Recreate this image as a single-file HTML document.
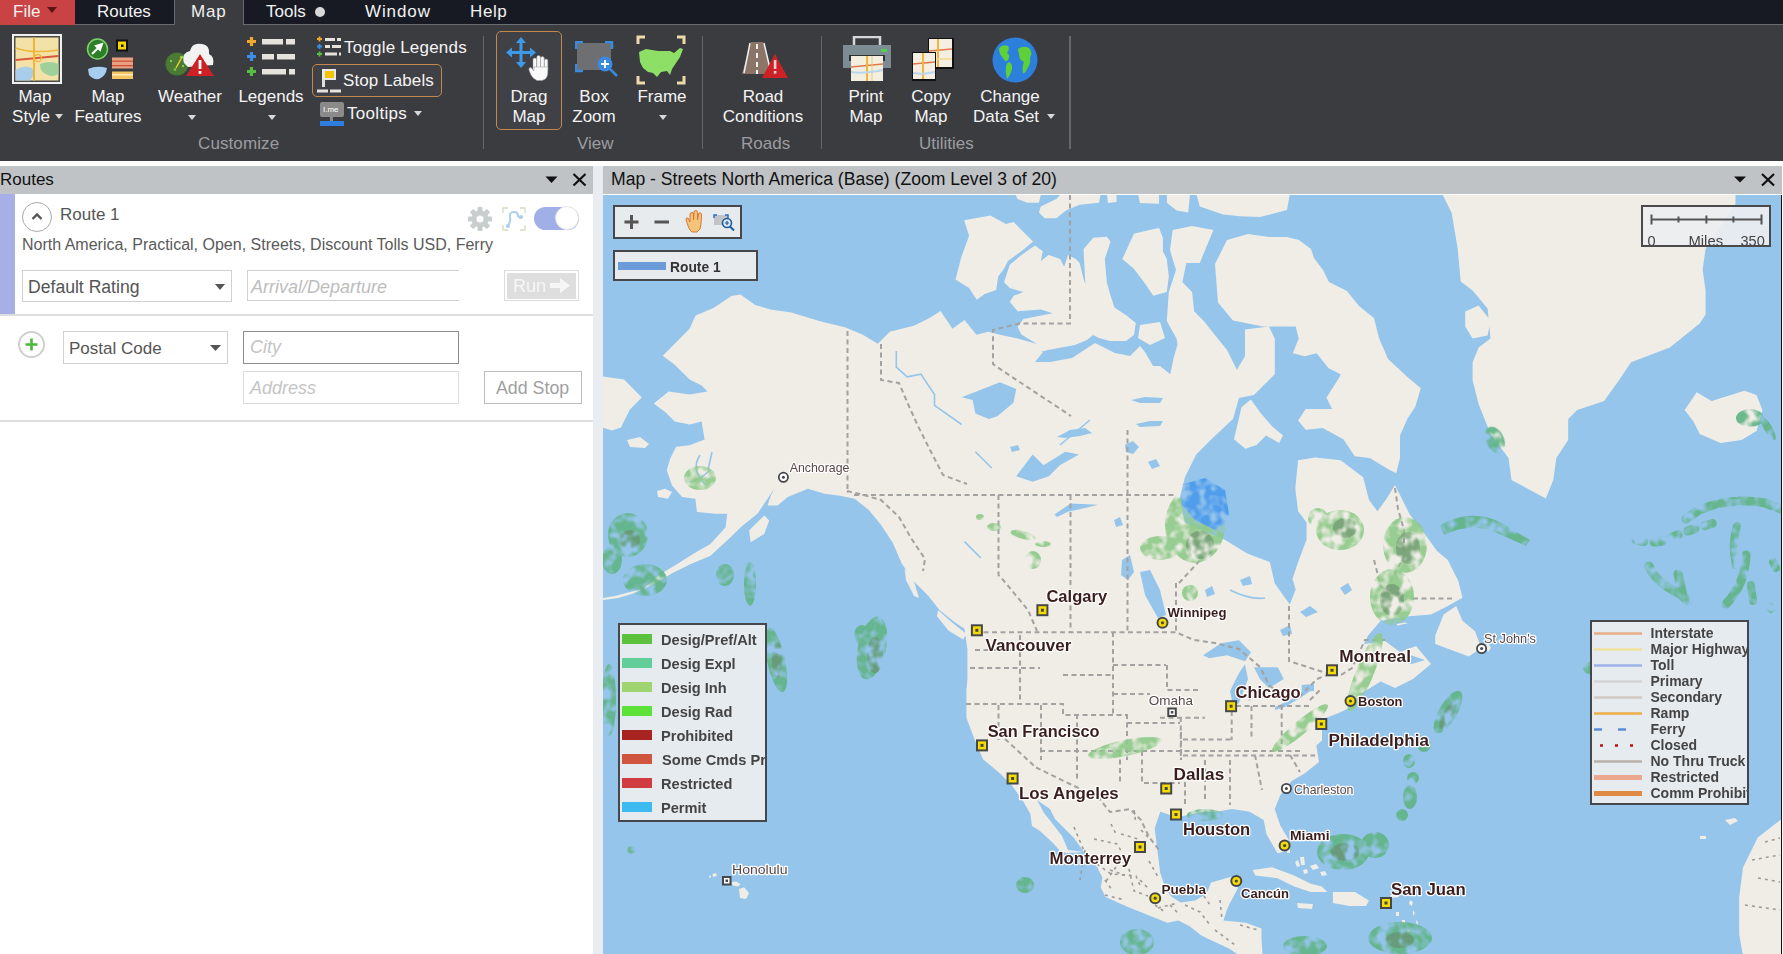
<!DOCTYPE html>
<html><head><meta charset="utf-8">
<style>
*{box-sizing:border-box;margin:0;padding:0}
html,body{width:1783px;height:954px;overflow:hidden;background:#fff;font-family:"Liberation Sans",sans-serif}
.abs{position:absolute}
#menubar{position:absolute;left:0;top:0;width:1783px;height:25px;background:#171a22;border-bottom:1px solid #6a6b70}
.mi{position:absolute;top:0;height:25px;color:#f2f2f2;font-size:17px;line-height:23px;white-space:nowrap}
#ribbon{position:absolute;left:0;top:25px;width:1783px;height:136px;background:#3b3c40}
.rt{position:absolute;color:#f4f4f4;font-size:17px;line-height:20px;text-align:center;white-space:nowrap}
.gl{position:absolute;color:#9b9ca1;font-size:17px;line-height:20px;white-space:nowrap}
.sep{position:absolute;top:36px;width:1px;height:113px;background:#66676b}
.arr{position:absolute;width:0;height:0;border-left:4px solid transparent;border-right:4px solid transparent;border-top:5px solid #d8d8d8}
#strip{position:absolute;left:0;top:161px;width:1783px;height:5px;background:#fff}
.hdr{position:absolute;top:166px;height:28px;background:#bfc3c6;color:#111;font-size:17px;line-height:27px;white-space:nowrap}
#left{position:absolute;left:0;top:194px;width:593px;height:760px;background:#fff}
#divider{position:absolute;left:593px;top:166px;width:10px;height:788px;background:#e9ecf0}
#map{position:absolute;left:603px;top:195px;width:1178px;height:759px;background:#95c5eb;overflow:hidden}
#rborder{position:absolute;left:1781px;top:195px;width:1px;height:759px;background:#111}
</style></head><body>
<div id="menubar">
  <div class="mi" style="left:0;width:75px;background:#c94244"><span style="position:absolute;left:13px">File</span></div>
  <div class="mi" style="left:97px">Routes</div>
  <div class="mi" style="left:174px;width:70px;height:26px;background:#3b3c40;border-left:1px solid #6a6b70;border-right:1px solid #6a6b70"><span style="position:absolute;left:16px;letter-spacing:0.8px">Map</span></div>
  <div class="mi" style="left:266px">Tools</div>
  <div class="mi" style="left:365px;letter-spacing:0.9px">Window</div>
  <div class="mi" style="left:470px;letter-spacing:0.6px">Help</div>
</div>
<div id="ribbon"><div style="position:absolute;left:0;top:-25px;width:1783px;height:161px">
<!-- Map Style -->
<svg class="abs" style="left:12px;top:34px" width="50" height="50" viewBox="0 0 50 50">
 <rect x="1" y="1" width="48" height="48" fill="#4a4a4a" stroke="#f0f0f0" stroke-width="2"/>
 <rect x="3.5" y="3.5" width="43" height="43" fill="#f3e2a8"/>
 <path d="M3.5 36 Q12 30 20 34 Q24 40 18 46.5 L3.5 46.5 Z" fill="#a9cdea"/>
 <path d="M28 30 Q38 26 46.5 30 L46.5 40 Q40 44 34 40 Q28 38 28 30Z" fill="#9fd09a"/>
 <path d="M3.5 14 Q20 20 46.5 16" stroke="#f0b63a" stroke-width="1.5" fill="none"/>
 <path d="M3.5 26 L46.5 22" stroke="#d9573b" stroke-width="2" fill="none"/>
 <path d="M22 3.5 L22 46.5" stroke="#f0b63a" stroke-width="2" fill="none"/>
 <circle cx="26" cy="24" r="3.5" stroke="#f0b63a" stroke-width="1.3" fill="none"/>
</svg>
<div class="rt" style="left:0;top:87px;width:70px">Map<br><span style="position:relative;left:-4px">Style</span></div>
<div class="arr" style="left:55px;top:114px"></div>
<!-- Map Features -->
<svg class="abs" style="left:86px;top:38px" width="50" height="44" viewBox="0 0 50 44">
 <circle cx="11.5" cy="11" r="10" fill="#2e7d2a" stroke="#7cd36a" stroke-width="1.5"/>
 <path d="M6 16 L12 10 M10 8 L16 6 L14 12 Z" stroke="#fff" stroke-width="2" fill="#fff"/>
 <rect x="30" y="1.5" width="12" height="12" fill="#111"/>
 <rect x="32" y="3.5" width="8" height="8" fill="#f5d800"/>
 <rect x="35" y="6.5" width="2.5" height="2.5" fill="#111"/>
 <rect x="26" y="19.5" width="21" height="11" fill="#e8a080"/>
 <rect x="26" y="22.5" width="21" height="1.3" fill="#d0503a"/><rect x="26" y="27" width="21" height="1.3" fill="#d0503a"/>
 <rect x="26" y="33.5" width="21" height="7.5" fill="#f3c565"/>
 <rect x="26" y="36.2" width="21" height="1.3" fill="#fff2c8"/>
 <path d="M2 31 Q11 27 21 30 Q20 38 13 41 Q7 42 3 37 Z" fill="#a7cdf0"/>
</svg>
<div class="rt" style="left:72px;top:87px;width:72px">Map<br>Features</div>
<!-- Weather -->
<svg class="abs" style="left:164px;top:41px" width="52" height="37" viewBox="0 0 52 37">
 <circle cx="13" cy="23" r="11.5" fill="#4c7a34"/>
 <circle cx="13" cy="23" r="11.5" fill="none" stroke="#2f5a20" stroke-width="1" stroke-dasharray="2 2"/>
 <path d="M6 20 l2 0 M16 16 l3 0 M10 28 l2 1 M18 25 l2 0" stroke="#7bd04d" stroke-width="2"/>
 <path d="M12 27 L18 16" stroke="#e8d030" stroke-width="1.5"/>
 <path d="M20 22 Q17 12 26 10 Q28 1 38 3 Q46 4 45 13 Q51 16 49 24 L24 26 Z" fill="#f2f2f2"/>
 <path d="M36 13 L50 35 L22 35 Z" fill="#cc2226"/>
 <rect x="34.6" y="19" width="2.8" height="9" fill="#fff"/><rect x="34.6" y="30" width="2.8" height="2.8" fill="#fff"/>
</svg>
<div class="rt" style="left:150px;top:87px;width:80px">Weather</div>
<div class="arr" style="left:188px;top:115px"></div>
<!-- Legends -->
<svg class="abs" style="left:246px;top:36px" width="52" height="44" viewBox="0 0 52 44">
 <path d="M1 5.5 h9 M5.5 1 v9" stroke="#f0a830" stroke-width="3.2"/>
 <path d="M1 20.5 h9 M5.5 16 v9" stroke="#3a8ee8" stroke-width="3.2"/>
 <path d="M1 35.5 h9 M5.5 31 v9" stroke="#58c040" stroke-width="3.2"/>
 <rect x="16" y="3" width="21" height="5.5" fill="#e6e2dc"/><rect x="40" y="3" width="9" height="5.5" fill="#e6e2dc"/>
 <rect x="16" y="18" width="12" height="5.5" fill="#e6e2dc"/><rect x="31" y="18" width="18" height="5.5" fill="#e6e2dc"/>
 <rect x="16" y="33" width="24" height="5.5" fill="#e6e2dc"/><rect x="43" y="33" width="6" height="5.5" fill="#e6e2dc"/>
</svg>
<div class="rt" style="left:231px;top:87px;width:80px">Legends</div>
<div class="arr" style="left:268px;top:115px"></div>
<!-- Toggle legends small -->
<svg class="abs" style="left:316px;top:36px" width="26" height="22" viewBox="0 0 26 22">
 <path d="M1 3 h5 M3.5 0.5 v5" stroke="#f0a830" stroke-width="1.8"/>
 <path d="M1 10.5 h5 M3.5 8 v5" stroke="#3a8ee8" stroke-width="1.8"/>
 <path d="M1 18 h5 M3.5 15.5 v5" stroke="#58c040" stroke-width="1.8"/>
 <rect x="9" y="2" width="10" height="3" fill="#e6e2dc"/><rect x="21" y="2" width="4" height="3" fill="#e6e2dc"/>
 <rect x="9" y="9" width="5" height="3" fill="#e6e2dc"/><rect x="16" y="9" width="9" height="3" fill="#e6e2dc"/>
 <rect x="9" y="16.5" width="12" height="3" fill="#e6e2dc"/><rect x="23" y="16.5" width="2" height="3" fill="#e6e2dc"/>
</svg>
<div class="rt" style="left:344px;top:38px;text-align:left;letter-spacing:0.2px">Toggle Legends</div>
<!-- Stop labels -->
<div class="abs" style="left:312px;top:64px;width:130px;height:33px;border:1.5px solid #c4884c;border-radius:5px;background:#404146"></div>
<svg class="abs" style="left:316px;top:68px" width="26" height="27" viewBox="0 0 26 27">
 <rect x="6" y="1" width="3" height="18" fill="#e0e0e0"/>
 <rect x="6" y="1" width="14" height="11" fill="#e8e8e8"/>
 <rect x="9" y="3" width="9" height="7" fill="#f5c400"/>
 <rect x="1" y="21.5" width="11" height="3" fill="#e6e2dc"/><rect x="14" y="21.5" width="11" height="3" fill="#e6e2dc"/>
</svg>
<div class="rt" style="left:343px;top:71px;text-align:left;letter-spacing:0.1px">Stop Labels</div>
<!-- Tooltips -->
<svg class="abs" style="left:319px;top:101px" width="26" height="26" viewBox="0 0 26 26">
 <rect x="1" y="1" width="24" height="15" rx="2" fill="#8a8a8a"/>
 <text x="4" y="10.5" font-size="8" fill="#fff" font-family="Liberation Sans">I.me</text>
 <rect x="11" y="16" width="3" height="5" fill="#8a8a8a"/>
 <rect x="1" y="20" width="24" height="5" fill="#2f7de0"/>
</svg>
<div class="rt" style="left:347px;top:104px;text-align:left;letter-spacing:0.3px">Tooltips</div>
<div class="arr" style="left:414px;top:111px"></div>
<div class="gl" style="left:198px;top:134px;letter-spacing:0.1px">Customize</div>
<div class="sep" style="left:483px"></div>
<!-- Drag Map -->
<div class="abs" style="left:496px;top:31px;width:66px;height:99px;border:1.5px solid #c4884c;border-radius:5px;background:#404146"></div>
<svg class="abs" style="left:506px;top:37px" width="46" height="45" viewBox="0 0 46 45">
 <g fill="#3d9ae8">
 <rect x="13.5" y="5" width="3" height="21"/><rect x="4" y="14" width="22" height="3"/>
 <path d="M15 0 L20 6 L10 6Z M15 31 L20 25 L10 25Z M0 15.5 L6 10.5 L6 20.5Z M30 15.5 L24 10.5 L24 20.5Z"/>
 </g>
 <g fill="#fafafa" stroke="#9a9a9a" stroke-width="0.5">
 <rect x="27" y="21" width="3.6" height="13" rx="1.8"/><rect x="30.8" y="18.5" width="3.6" height="15" rx="1.8"/><rect x="34.6" y="19.5" width="3.6" height="14" rx="1.8"/><rect x="38.4" y="22" width="3.4" height="12" rx="1.7"/>
 <path d="M23 33 Q22.5 30 25 30.5 L28 34 L28 30 L41.8 30 L41.8 35 Q42 42 36 43.5 L31 43.5 Q27 42 25 38 Z"/>
 </g>
</svg>
<div class="rt" style="left:496px;top:87px;width:66px">Drag<br>Map</div>
<!-- Box Zoom -->
<svg class="abs" style="left:575px;top:41px" width="44" height="37" viewBox="0 0 44 37">
 <rect x="2" y="2" width="34" height="27" fill="#6e6f73"/>
 <path d="M1 8 V1 H8 M30 1 H37 V8 M1 23 V30 H8" stroke="#3a8ae0" stroke-width="2.5" fill="none"/>
 <circle cx="30" cy="23" r="7.5" fill="#3a8ae0"/>
 <path d="M26 23 h8 M30 19 v8" stroke="#fff" stroke-width="2"/>
 <path d="M35 28 L42 35" stroke="#3a8ae0" stroke-width="2.5"/>
</svg>
<div class="rt" style="left:562px;top:87px;width:64px">Box<br>Zoom</div>
<!-- Frame -->
<svg class="abs" style="left:636px;top:35px" width="50" height="50" viewBox="0 0 50 50">
 <path d="M2 9 V2 H9 M41 2 H48 V9 M2 41 V48 H9 M41 48 H48 V41" stroke="#eed9a8" stroke-width="3" fill="none"/>
 <path d="M3 17 L10 14 L22 16 L34 16 L38 18 L44 13 L47 14 L44 22 L40 28 L36 34 L34 40 L31 36 L25 37 L21 42 L17 38 L12 37 L7 33 L4 27 Z" fill="#8de065"/>
</svg>
<div class="rt" style="left:626px;top:87px;width:72px">Frame</div>
<div class="arr" style="left:659px;top:115px"></div>
<div class="gl" style="left:577px;top:134px">View</div>
<div class="sep" style="left:702px"></div>
<!-- Road Conditions -->
<svg class="abs" style="left:741px;top:41px" width="48" height="38" viewBox="0 0 48 38">
 <path d="M10 1 L22 1 L32 33 L1 33 Z" fill="#8a7568"/>
 <path d="M9 2 L3 32 M23 2 L30 32" stroke="#f0f0f0" stroke-width="1.5"/>
 <path d="M16 3 V8 M16 12 V17 M16 21 V26 M16 29 V33" stroke="#f0f0f0" stroke-width="2"/>
 <path d="M34 13 L47 37 L21 37 Z" fill="#cc2226"/>
 <rect x="32.8" y="19" width="2.6" height="9" fill="#f4d0d0"/><rect x="32.8" y="30" width="2.6" height="2.6" fill="#f4d0d0"/>
</svg>
<div class="rt" style="left:713px;top:87px;width:100px">Road<br>Conditions</div>
<div class="gl" style="left:741px;top:134px">Roads</div>
<div class="sep" style="left:821px"></div>
<!-- Print Map -->
<svg class="abs" style="left:842px;top:36px" width="50" height="46" viewBox="0 0 50 46">
 <rect x="12" y="1" width="26" height="12" fill="none" stroke="#d8d8d8" stroke-width="2.5"/>
 <rect x="1" y="9" width="48" height="23" fill="#7d8b92"/>
 <rect x="39" y="13" width="6" height="3" fill="#4fd04f"/>
 <rect x="7" y="19" width="36" height="6" fill="#2f3336"/>
 <rect x="9" y="20" width="32" height="25" fill="#f3efe0"/>
 <path d="M9 31 L41 28" stroke="#e0784a" stroke-width="1.5"/>
 <path d="M25 20 L25 45" stroke="#f0b63a" stroke-width="2"/>
 <path d="M30 20 L30 45" stroke="#f3c96a" stroke-width="1"/>
 <path d="M9 36 Q20 38 41 34" stroke="#b9d6ee" stroke-width="2" fill="none"/>
</svg>
<div class="rt" style="left:826px;top:87px;width:80px">Print<br>Map</div>
<!-- Copy Map -->
<svg class="abs" style="left:911px;top:37px" width="44" height="44" viewBox="0 0 44 44">
 <rect x="17" y="1" width="26" height="31" fill="#111"/>
 <rect x="18" y="2" width="23" height="28" fill="#f4efe2"/>
 <path d="M18 14 L41 12" stroke="#e0784a" stroke-width="1.5"/><path d="M27 2 V30" stroke="#f0b63a" stroke-width="2"/>
 <path d="M18 22 L41 22" stroke="#f3d890" stroke-width="1.5"/>
 <rect x="1" y="15" width="24" height="29" fill="#111"/>
 <rect x="2" y="16" width="22" height="26" fill="#f4efe2"/>
 <path d="M2 27 L24 25" stroke="#e0784a" stroke-width="1.5"/><path d="M12 16 V42" stroke="#f0b63a" stroke-width="2"/>
 <path d="M2 36 Q12 38 24 35" stroke="#b9d6ee" stroke-width="2" fill="none"/>
</svg>
<div class="rt" style="left:891px;top:87px;width:80px">Copy<br>Map</div>
<!-- Change Data Set -->
<svg class="abs" style="left:991px;top:36px" width="48" height="48" viewBox="0 0 48 48">
 <circle cx="24" cy="24" r="22.5" fill="#2d7fdc"/>
 <path d="M8 12 Q12 8 17 10 Q19 13 16 17 Q20 19 17 24 Q14 27 12 22 Q8 18 8 12Z" fill="#5ed03a"/>
 <path d="M17 26 Q22 27 21 33 Q19 40 16 43 Q14 36 15 30 Z" fill="#5ed03a"/>
 <path d="M27 13 Q32 9 38 12 Q42 16 39 22 Q40 28 36 33 Q34 38 32 37 Q31 30 33 26 Q28 24 28 19 Z" fill="#5ed03a"/>
</svg>
<div class="rt" style="left:965px;top:87px;width:90px">Change<br><span style="position:relative;left:-4px">Data Set</span></div>
<div class="arr" style="left:1047px;top:114px"></div>
<div class="gl" style="left:919px;top:134px">Utilities</div>
<div class="sep" style="left:1069px;width:2px"></div>
</div>
</div>
<div id="strip"></div>
<div class="hdr" style="left:0;width:593px"><span style="position:absolute;left:0">Routes</span></div>
<div class="hdr" style="left:603px;width:1179px"><span style="position:absolute;left:8px;font-size:17.6px">Map - Streets North America (Base) (Zoom Level 3 of 20)</span></div>
<div id="left"><div style="position:absolute;left:0;top:-194px;width:593px;height:954px;color:#555">
<div class="abs" style="left:0;top:194px;width:15px;height:120px;background:#a7b0e6"></div>
<div class="abs" style="left:0;top:314px;width:593px;height:1.5px;background:#dedede"></div>
<div class="abs" style="left:22px;top:202px;width:30px;height:30px;border:1.5px solid #aaa;border-radius:50%"></div>
<svg class="abs" style="left:30px;top:210px" width="14" height="12" viewBox="0 0 14 12"><path d="M2.5 9 L7 4.5 L11.5 9" stroke="#555" stroke-width="2.4" fill="none"/></svg>
<div class="abs" style="left:60px;top:204px;font-size:17px;line-height:22px;white-space:nowrap">Route 1</div>
<div class="abs" style="left:22px;top:235px;font-size:16px;line-height:20px;white-space:nowrap;color:#5a5a5a">North America, Practical, Open, Streets, Discount Tolls USD, Ferry</div>
<svg class="abs" style="left:467px;top:206px" width="26" height="26" viewBox="0 0 26 26">
 <g fill="#c9cdcd"><circle cx="13" cy="13" r="8.5"/>
 <rect x="10.5" y="1" width="5" height="24" rx="1"/><rect x="1" y="10.5" width="24" height="5" rx="1"/>
 <rect x="10.5" y="1" width="5" height="24" rx="1" transform="rotate(45 13 13)"/><rect x="10.5" y="1" width="5" height="24" rx="1" transform="rotate(-45 13 13)"/></g>
 <circle cx="13" cy="13" r="3.5" fill="#fff"/>
</svg>
<svg class="abs" style="left:502px;top:207px" width="24" height="24" viewBox="0 0 24 24">
 <path d="M1 6 V1 H6 M18 1 H23 V6 M1 18 V23 H6 M18 23 H23 V18" stroke="#d6dcc0" stroke-width="1.3" fill="none"/>
 <path d="M6 19 Q9 14 8 10 Q7 5 12 5 Q16 5 16 9 Q17 11 19 10" stroke="#a8d0ea" stroke-width="2" fill="none"/>
 <circle cx="19" cy="10" r="2" fill="#a8d0ea"/><circle cx="6" cy="19" r="2" fill="#a8d0ea"/>
</svg>
<div class="abs" style="left:534px;top:207px;width:45px;height:23px;border-radius:12px;background:#a0b0e6"></div>
<div class="abs" style="left:555px;top:206px;width:24px;height:24px;border-radius:50%;background:#fff;border:1px solid #e2e2e2"></div>
<div class="abs" style="left:22px;top:270px;width:210px;height:32px;border:1.3px solid #d0d0d0;background:#fff"></div>
<div class="abs" style="left:28px;top:276px;font-size:17.6px;line-height:22px;white-space:nowrap">Default Rating</div>
<svg class="abs" style="left:214px;top:283px" width="12" height="8"><path d="M1 1 L11 1 L6 7Z" fill="#555"/></svg>
<div class="abs" style="left:247px;top:270px;width:212px;height:31px;border-top:1.3px solid #d0d0d0;border-left:1.3px solid #d0d0d0;border-bottom:1.3px solid #d0d0d0"></div>
<div class="abs" style="left:251px;top:276px;font-size:18px;line-height:22px;font-style:italic;color:#bdbdbd;white-space:nowrap">Arrival/Departure</div>
<div class="abs" style="left:504px;top:270px;width:75px;height:31px;border:1.3px solid #dcdcdc;background:#fff"></div>
<div class="abs" style="left:507px;top:273px;width:69px;height:26px;background:#dedede"></div>
<div class="abs" style="left:513px;top:275px;font-size:18px;line-height:22px;color:#f6f6f6;white-space:nowrap">Run</div>
<svg class="abs" style="left:549px;top:277px" width="22" height="17" viewBox="0 0 22 17"><path d="M1 6 H11 V1 L21 8.5 L11 16 V11 H1Z" fill="#f6f6f6"/></svg>
<div class="abs" style="left:18px;top:331px;width:27px;height:27px;border:2.5px solid #cfcfcf;border-radius:50%"></div>
<svg class="abs" style="left:24px;top:337px" width="15" height="15"><path d="M7.5 1.5 V13.5 M1.5 7.5 H13.5" stroke="#4ab83a" stroke-width="2.6"/></svg>
<div class="abs" style="left:63px;top:331px;width:165px;height:33px;border:1.3px solid #d0d0d0;background:#fff"></div>
<div class="abs" style="left:69px;top:338px;font-size:17px;line-height:22px;white-space:nowrap">Postal Code</div>
<svg class="abs" style="left:209px;top:344px" width="13" height="8"><path d="M1 1 L12 1 L6.5 7Z" fill="#555"/></svg>
<div class="abs" style="left:243px;top:331px;width:216px;height:33px;border:1.6px solid #8a8d8d;background:#fff"></div>
<div class="abs" style="left:250px;top:336px;font-size:18px;line-height:22px;font-style:italic;color:#c4c4c4;white-space:nowrap">City</div>
<div class="abs" style="left:243px;top:371px;width:216px;height:33px;border:1.3px solid #dcdcdc;background:#fff"></div>
<div class="abs" style="left:250px;top:377px;font-size:18px;line-height:22px;font-style:italic;color:#c4c4c4;white-space:nowrap">Address</div>
<div class="abs" style="left:484px;top:371px;width:98px;height:33px;border:1.3px solid #bdbdbd;background:#fff"></div>
<div class="abs" style="left:496px;top:377px;font-size:17.8px;line-height:22px;color:#a0a0a0;white-space:nowrap">Add Stop</div>
<div class="abs" style="left:0;top:420px;width:593px;height:1.5px;background:#dedede"></div>
</div>
</div>
<div id="divider"></div>
<div id="map"><svg width="1178" height="759" viewBox="603 195 1178 759" style="position:absolute;left:0;top:0"><path fill="#f0ede6" d="M662.7,355.7 L677.7,340.8 689.6,328.8 695.6,315.4 713.5,307.9 731.4,296.0 740.4,294.5 755.3,305.0 770.3,309.4 791.2,312.4 821.0,321.4 845.0,327.3 862.9,334.8 877.8,343.8 889.8,331.8 913.7,325.8 928.6,318.4 940.6,310.9 952.5,328.8 964.5,319.9 976.4,334.8 988.3,331.8 1000.0,334.8 1017.6,338.5 1037.0,344.0 1043.0,352.0 1035.0,362.0 1050.0,362.0 1072.0,358.0 1095.0,343.0 1101.0,346.0 1115.0,353.0 1130.0,356.0 1140.0,346.0 1145.0,352.0 1153.0,366.0 1160.0,366.0 1170.3,374.2 1173.3,359.3 1179.2,338.4 1191.2,332.4 1209.1,335.4 1221.1,350.3 1236.0,371.3 1245.0,356.3 1245.0,329.4 1268.9,326.4 1274.8,338.4 1274.8,374.2 1253.9,395.1 1239.0,398.1 1233.0,419.0 1213.2,437.6 1196.2,454.5 1184.9,477.2 1179.3,499.8 1184.9,522.5 1201.9,531.0 1224.5,539.5 1247.2,553.6 1269.8,562.1 1274.8,583.5 1289.8,604.4 1295.7,589.5 1292.5,579.1 1298.1,562.1 1306.6,539.5 1306.6,522.5 1298.1,511.2 1295.3,488.5 1298.1,460.2 1315.1,457.4 1340.6,460.2 1363.2,477.2 1368.9,499.8 1377.4,511.2 1385.9,499.8 1395.0,485.0 1409.9,514.8 1421.8,529.7 1436.8,550.7 1447.8,560.0 1458.3,581.0 1462.5,597.8 1447.8,606.1 1431.0,614.5 1405.8,616.6 1380.7,620.8 1368.1,635.5 1363.9,643.9 1385.0,641.0 1400.0,652.0 1413.0,652.0 1392.0,655.0 1416.0,646.0 1431.0,664.0 1413.0,679.0 1395.0,688.0 1380.7,681.6 1359.7,694.2 1355.5,704.7 1338.7,713.1 1322.0,719.4 1322.0,740.4 1316.3,745.4 1319.0,762.0 1305.2,773.0 1291.3,781.3 1280.3,795.2 1274.7,809.0 1280.3,825.6 1288.6,839.5 1288.6,850.6 1277.5,853.3 1266.4,834.0 1263.7,820.1 1249.8,811.8 1232.2,809.0 1216.6,811.8 1204.5,811.8 1176.8,817.3 1160.2,811.8 1154.7,828.4 1157.4,850.6 1160.2,872.7 1165.7,889.3 1171.8,897.0 1180.8,902.6 1195.3,900.4 1206.6,893.7 1211.0,882.4 1223.4,879.0 1231.2,876.8 1238.0,888.0 1229.0,904.9 1226.7,910.5 1223.4,920.6 1245.8,922.8 1261.5,928.4 1261.5,938.5 1262.6,956.0 1240.2,956.0 1229.0,948.6 1212.2,940.8 1201.0,935.2 1189.7,926.2 1178.5,920.6 1167.3,922.8 1150.5,916.0 1128.0,907.0 1105.6,897.0 1100.7,887.5 1102.4,877.4 1097.4,867.4 1084.0,852.0 1066.0,853.0 1060.0,851.0 1053.0,843.0 1040.0,831.0 1032.0,826.0 1030.3,813.7 1023.6,802.0 1011.8,785.2 1000.0,773.4 990.0,765.0 983.0,759.2 974.7,739.8 966.4,717.7 966.4,690.0 967.4,679.5 967.4,649.6 964.5,628.7 954.4,621.9 939.8,610.2 928.0,595.5 913.4,580.9 901.6,563.2 892.8,542.7 881.1,525.1 869.3,510.4 854.7,498.7 840.0,495.8 824.6,493.7 807.8,488.7 787.7,497.0 777.6,505.4 767.5,505.4 770.9,495.4 779.3,478.6 774.2,488.7 764.2,503.8 757.4,513.8 740.7,527.2 730.6,537.3 710.5,555.8 690.3,564.2 673.6,572.6 653.4,584.3 643.4,589.3 646.7,586.0 660.1,574.2 676.9,564.2 695.4,552.4 710.5,544.0 725.6,527.2 727.2,513.8 715.5,513.8 697.0,512.1 695.4,498.7 682.0,497.0 671.9,485.3 666.8,470.2 670.2,458.5 676.1,446.7 689.6,445.3 704.6,439.4 701.6,421.4 689.6,424.4 674.7,421.4 665.7,412.5 653.8,403.5 668.7,391.6 689.6,394.6 707.5,391.6 701.6,385.6 689.6,379.6 674.7,364.7 Z M600.0,376.0 L624.0,379.6 641.8,397.5 629.9,409.5 620.9,427.4 612.0,430.4 600.0,427.0 Z M627.0,440.0 L640.0,437.0 649.0,444.0 645.0,448.0 630.0,447.0 Z M964.2,220.2 L990.4,215.4 1005.9,224.1 1013.7,222.1 1021.4,229.9 1033.1,241.5 1021.4,251.2 1007.9,260.9 1004.0,268.7 998.2,276.4 996.2,290.0 984.6,293.9 976.8,299.7 969.1,288.1 955.5,279.4 961.3,257.1 969.1,235.7 Z M1004.0,282.3 L1009.8,264.8 1021.4,255.1 1035.0,245.4 1042.8,251.2 1040.8,260.9 1048.6,255.1 1060.2,259.0 1064.1,266.7 1068.0,255.1 1075.7,259.0 1079.6,262.9 1083.5,278.4 1085.4,284.2 1083.5,249.3 1093.2,237.7 1106.8,236.7 1110.6,241.5 1104.8,259.0 1106.8,282.3 1110.6,295.8 1114.5,307.5 1126.2,315.2 1135.8,323.0 1134.0,335.0 1126.0,341.0 1110.0,341.0 1099.0,338.0 1093.0,335.0 1087.0,340.0 1075.0,345.0 1048.0,350.0 1033.0,354.0 1037.0,344.0 1021.4,334.6 1017.6,326.9 1023.4,319.1 1052.5,313.3 1040.8,309.4 1017.6,311.3 1009.8,301.7 1013.7,295.8 1023.4,292.0 1009.8,288.1 Z M1015.6,195.0 L1040.8,195.0 1038.9,202.8 1027.3,202.8 1017.6,198.9 Z M1040.8,206.6 L1056.3,198.9 1062.2,193.0 1100.9,193.0 1099.0,202.8 1079.6,204.7 1066.0,210.5 1056.3,218.3 1044.7,218.3 1038.9,212.5 Z M1106.8,193.0 L1116.5,193.0 1116.5,202.0 1108.0,203.0 Z M1137.8,193.0 L1159.1,193.0 1159.0,203.7 1140.0,203.0 Z M1166.9,193.0 L1190.1,193.0 1188.2,212.5 1176.6,210.5 1166.9,202.8 Z M1196.0,193.0 L1290.0,193.0 1287.0,210.0 1260.0,217.0 1240.0,216.3 1223.1,214.4 1199.8,206.6 Z M1122.3,259.0 L1133.9,233.8 1149.4,229.9 1159.1,228.0 1162.9,237.7 1162.9,251.2 1166.8,259.0 1168.8,276.4 1166.8,291.9 1153.3,295.8 1145.5,284.2 1133.9,268.7 Z M1172.7,229.9 L1192.1,226.0 1213.4,229.9 1199.8,262.9 1186.3,262.9 1182.4,282.3 1192.1,291.9 1194.1,311.3 1203.8,321.0 1211.5,330.7 1227.0,350.1 1236.7,369.5 1240.0,380.0 1182.4,380.0 1172.7,365.6 1178.5,350.1 1176.5,338.5 1166.8,321.0 1168.8,291.9 1176.0,270.0 1170.0,250.0 Z M1140.0,325.0 L1160.0,322.0 1165.0,338.0 1150.0,345.0 1138.0,338.0 Z M1215.0,264.0 L1227.0,240.0 1248.0,234.0 1269.0,237.0 1287.0,237.0 1299.0,240.0 1311.0,249.0 1314.0,258.0 1323.0,270.0 1329.0,282.0 1347.0,291.0 1359.0,306.0 1374.0,318.0 1379.0,338.0 1388.0,359.0 1407.5,377.0 1420.8,388.3 1415.1,407.2 1407.5,418.5 1400.0,435.5 1400.0,458.1 1396.2,473.2 1388.7,469.4 1369.8,458.1 1354.7,456.2 1343.4,439.2 1322.6,427.9 1305.7,429.8 1298.1,420.4 1305.7,409.1 1332.1,409.1 1326.4,397.7 1339.6,377.0 1340.6,374.2 1328.6,368.3 1316.7,353.3 1304.7,356.3 1292.8,353.3 1298.7,338.4 1295.7,326.4 1262.9,326.4 1233.0,320.5 1218.0,302.5 Z M1234.0,439.2 L1241.5,407.2 1250.9,399.6 1260.4,412.8 1271.7,426.0 1283.0,435.5 1279.2,443.0 1266.0,435.5 1256.6,444.9 1245.3,448.7 Z M1441.3,192.0 L1735.5,192.0 1735.5,204.0 1705.6,248.8 1702.6,269.7 1705.6,290.6 1705.6,314.5 1699.7,323.5 1669.8,347.4 1631.0,362.3 1619.0,380.2 1604.1,401.1 1577.2,410.1 1568.2,419.0 1568.2,440.0 1556.3,457.9 1553.3,480.0 1545.8,498.4 1530.0,490.0 1511.5,480.0 1508.5,457.9 1490.5,434.0 1478.6,404.1 1472.6,380.2 1472.6,362.3 1478.6,347.4 1490.5,338.4 1487.6,308.5 1472.6,290.6 1460.7,281.6 1457.7,248.8 1451.7,212.9 Z M1465.2,311.5 L1478.6,305.5 1490.5,320.5 1487.6,335.4 1472.6,338.4 1465.2,326.4 Z M1684.7,410.1 L1696.7,392.2 1711.6,401.1 1744.5,390.7 1756.5,395.1 1762.4,410.1 1756.5,431.0 1741.5,440.0 1720.6,443.0 1699.7,434.0 1693.7,422.0 Z M1435.2,635.5 L1443.6,614.5 1456.2,606.1 1462.5,620.8 1475.0,631.3 1481.3,648.1 1468.8,656.5 1452.0,650.2 1435.2,643.9 Z M1252.6,869.9 L1272.0,867.2 1294.1,875.5 1310.7,883.8 1321.8,886.5 1327.3,892.1 1310.7,892.1 1294.1,886.5 1277.5,878.2 1255.4,875.5 Z M1332.9,892.1 L1355.0,892.1 1368.9,900.4 1366.1,905.9 1349.5,905.9 1332.9,903.1 Z M1297.0,903.0 L1313.0,904.0 1312.0,909.0 1298.0,908.0 Z M938.3,610.2 L951.5,621.9 966.2,633.7 963.2,639.5 948.6,630.7 936.8,616.1 Z M1783.0,818.0 L1757.8,837.6 1743.0,867.4 1739.2,897.0 1739.2,934.2 1743.0,956.0 1783.0,956.0 Z M739.0,889.0 L744.0,887.3 749.0,893.0 746.0,899.0 740.0,898.0 Z M731.5,882.0 L736.0,881.4 740.5,884.0 738.0,886.5 733.0,885.5 Z M712.5,874.0 L716.0,873.0 717.0,876.0 713.0,877.0 Z M709.0,876.0 L711.0,875.5 711.0,877.5 709.0,877.5 Z M749.1,530.6 L764.2,515.5 769.2,520.5 764.2,534.0 750.7,542.3 Z M657.0,491.0 L665.0,488.7 672.0,492.0 668.0,498.7 658.0,497.0 Z M1396.6,624.0 L1405.0,622.5 1417.4,626.0 1412.0,630.4 1400.0,629.0 Z"/><path fill="#95c5eb" d="M1016.2,476.2 L1032.6,454.4 1043.5,465.3 1065.3,451.7 1078.9,454.4 1059.8,465.3 1048.9,476.2 1032.6,481.7 Z M961.7,397.2 L999.9,382.2 1016.2,389.0 1013.5,402.7 997.2,416.3 989.0,419.0 975.4,413.6 972.6,400.0 Z M1054.4,514.4 L1070.7,503.5 1098.0,504.8 1087.1,507.6 1068.0,511.7 1057.1,517.1 Z M1140.0,572.0 L1150.0,570.0 1160.0,590.0 1166.0,615.0 1158.0,618.0 1145.0,595.0 Z M1203.1,655.2 L1221.1,643.3 1239.0,640.3 1251.0,652.2 1245.0,661.2 1227.0,655.2 1209.1,658.2 Z M1245.0,664.2 L1248.0,679.1 1239.0,703.0 1233.0,706.0 1230.0,691.1 1239.0,673.1 Z M1253.9,667.2 L1277.8,667.2 1283.8,679.1 1268.9,688.1 1259.9,679.1 Z M1275.0,707.0 L1290.0,700.0 1305.0,690.0 1313.0,686.0 1312.0,690.0 1300.0,698.0 1285.0,707.0 1275.0,710.0 Z M1301.7,685.0 L1314.0,684.0 1314.0,691.0 1301.7,692.0 Z M1037.0,800.0 L1050.0,809.0 1055.0,819.0 1074.0,838.0 1084.0,852.0 1068.0,850.0 1062.0,836.0 1052.0,823.0 1044.0,813.0 Z M1368.0,636.0 L1400.0,625.0 1430.0,618.0 1435.0,640.0 1420.0,645.0 1400.0,650.0 1385.0,641.0 Z M1057.0,437.0 L1070.0,430.0 1085.0,428.0 1092.0,433.0 1080.0,436.0 1065.0,438.0 Z M1131.0,400.0 L1145.0,397.0 1163.0,398.0 1160.0,403.0 1140.0,403.0 Z M1136.0,424.0 L1150.0,421.0 1163.0,421.0 1160.0,426.0 1140.0,427.0 Z M1125.0,445.0 L1133.0,441.0 1139.0,447.0 1133.0,454.0 1126.0,452.0 Z M1148.0,462.0 L1156.0,459.0 1160.0,466.0 1152.0,469.0 Z M1114.0,520.0 L1120.0,517.0 1123.0,525.0 1116.0,527.0 Z M1122.0,560.0 L1130.0,555.0 1134.0,572.0 1128.0,580.0 1121.0,575.0 Z M1144.0,582.0 L1151.0,575.0 1157.0,592.0 1148.0,598.0 Z M1010.0,447.0 L1018.0,445.0 1020.0,450.0 1012.0,452.0 Z M1205.0,590.0 L1212.0,586.0 1215.0,594.0 1207.0,597.0 Z M1300.0,612.0 L1310.0,606.0 1318.0,612.0 1306.0,617.0 Z M1280.0,630.0 L1290.0,625.0 1292.0,634.0 1283.0,636.0 Z M1340.0,588.0 L1348.0,583.0 1352.0,590.0 1345.0,595.0 Z M1240.0,580.0 L1250.0,576.0 1252.0,584.0 1243.0,586.0 Z M1400.0,630.0 L1415.0,625.0 1428.0,628.0 1420.0,634.0 1405.0,635.0 Z M1395.0,660.0 L1410.0,655.0 1425.0,660.0 1412.0,664.0 Z"/><g fill="#f0ede6">
 <path d="M643,589 L630,592 L615,596 L603,598 L603,600 L618,598 L632,594 Z"/>
 <path d="M904.6,569 L912,575 L919,598 L914,596 L906,580Z"/>
 <path d="M1310,866 l6,-2 l3,4 l-6,2z M1320,872 l5,-1 l2,4 l-5,1z M1300,857 l4,0 l1,8 l-4,0z"/>
 <path d="M1396,912 l3,0 l0,4 l-3,0z M1402,920 l3,0 l0,5 l-3,0z M1407,930 l3,0 l0,5 l-3,0z"/>
 <path d="M1390,895 l8,-1 l1,3 l-8,1z"/>
 <path d="M1295,862 l3,-2 l2,6 l-3,1z M1303,870 l4,-1 l1,4 l-4,1z M1287,848 l3,0 l0,5 l-3,0z M1410,900 l3,2 l-1,4 l-3,-2z M1413,910 l2,3 l-2,3z M1416,920 l2,2 l-1,4z"/>
 <path d="M1725,820 l10,-2 l3,3 l-8,4z M1700,836 l6,0 l0,3 l-6,0z"/>
 <path d="M1485,646 l3,-3 l3,5 l-3,4z"/>
</g>
<g fill="none" stroke="#a2a2a2" stroke-width="2" stroke-dasharray="5 3.5">
 <path d="M847.5,331 V493"/>
 <path d="M847,491 L860,494 L881,500 L899,517 L911,538 L925,559 L923,571"/>
 <path d="M881,344 V380 L899,383 L908,404 L917,424 L929,448 L943,475 L967,484"/>
 <path d="M854,495 H1176"/>
 <path d="M998.5,495 V575 L1004,581 L1028,610 L1037,631"/>
 <path d="M1070.5,495 V632"/>
 <path d="M1127.5,430 V632"/>
 <path d="M1176,583 V631 M1179,583 L1203,557"/>
 <path d="M975,632.3 H1176 L1194,640 L1215,643 L1239,649 L1260,667 L1269,685 L1284,697 L1299,697 L1317,679 L1332,673 L1341,675 L1352,668 L1365,640 L1385,640"/>
 <path d="M1070,195 V323.5 H1019 L993,330 V364 L997,367 L1071,416"/>
 <path d="M966,704 H1063 V715 H1128 M1063,675 H1113 M1020,635 V705 M1113,632 V714 M1113,665 H1166 M1113,694 H1150 M1167,665 V690 H1200 M970,668 H1040 M975,650 H1020"/>
 <path d="M1077,714 V782 M1041,705 V760 M998.5,705 V740 M1005,739 L1036,767.5 M1127,714 V760 M1127,723 H1180 M1040,751 H1300 M1181,732 V760 M1120,751 V782 M1142,751 V783 H1180 M1185,782 V805"/>
 <path d="M1036,767.5 L1099,798 L1110,812 L1130,809 L1141,820 L1149,837 L1160,851"/>
 <path d="M1236,706 H1310 M1251.5,706 V740 M1281.7,705 V745 M1183,755.5 H1315 M1231.7,711 V740 M1160,717.7 H1205 M1183,739.4 H1233 M1180.8,717 V760 M1205,760 V800 M1230,760 V805 M1255,755 L1262,790 M1290,755 L1300,772"/>
 <path d="M1235,690 L1250,700 M1310,700 L1320,690"/>
 <path d="M1395,488 L1398,509 L1404,530 L1404,557 L1383,595.5 M1413,598.5 H1452 M1374,560 L1381,587 L1414,599 M1289,606 V661 L1326,673"/>
</g>
<g fill="none" stroke="#9b9b9b" stroke-width="1.6" stroke-dasharray="3 4">
 <path d="M1074,827 L1084,851 M1094,839 L1117.5,844 L1122.5,854 M1097,864 L1111,874 L1136,876 L1141,887.5 M1116,867 L1104,884 M1129,869 L1134,891 L1148,896 M1149,861 L1158,877 M1121,834 L1138,839 M1111,824 L1116,834 M1134,810 L1136,824 M1141,830 L1151,840 M1158,908 L1178,903"/>
 <path d="M1185,905 L1200,912 L1210,925 M1220,900 L1222,920 M1215,930 L1235,945 M1240,925 L1258,930 M1200,890 L1210,905 M1085,850 L1080,880 M1105,895 L1125,900 M1110,870 L1125,875 M1140,880 L1150,890 M1155,905 L1165,912 M1170,905 L1180,915 M1105,880 L1112,890"/>
 <path d="M1752,860 L1780,855 M1758,878 L1780,882 M1765,842 L1780,838 M1745,905 L1780,910"/>
</g>
<defs><filter id="mot" x="603" y="195" width="1178" height="759" filterUnits="userSpaceOnUse"><feTurbulence type="fractalNoise" baseFrequency="0.09" numOctaves="2" seed="7" result="n"/><feColorMatrix in="n" type="matrix" values="0 0 0 0 0  0 0 0 0 0  0 0 0 0 0  0 0 0 3.5 -1.05" result="a"/><feComposite in="SourceGraphic" in2="a" operator="in" result="c"/><feMerge><feMergeNode in="c"/></feMerge></filter></defs>
<g id="rivers" fill="none" stroke="#95c5eb" stroke-width="1.6">
 <path d="M896.3,350.9 L896.3,367.2 L907.2,376.8 L920.9,374.1 L934.5,394.5 L934.5,405.4 L961.7,424.5"/>
 <path d="M975.4,451.7 L991.7,468"/>
 <path d="M964.5,541.6 L980.8,558"/>
 <path d="M710,470 Q700,480 690,482 M700,455 Q690,470 706,485 M712,452 L708,470"/>
 <path d="M1060,445 L1090,420 M1230,590 Q1250,600 1265,598"/>
</g>
<g opacity="0.92" filter="url(#mot)">
 <g fill="#62b487">
  <ellipse cx="872" cy="648" rx="14" ry="32" transform="rotate(12 872 648)"/>
  <ellipse cx="862" cy="635" rx="8" ry="10"/>
  <ellipse cx="776" cy="660" rx="9" ry="33" transform="rotate(-12 776 660)"/>
  <ellipse cx="750" cy="584" rx="6" ry="22"/>
  <ellipse cx="628" cy="535" rx="20" ry="22"/>
  <ellipse cx="645" cy="580" rx="22" ry="16"/>
  <ellipse cx="612" cy="560" rx="10" ry="14"/>
  <ellipse cx="725" cy="575" rx="9" ry="11"/>
  <ellipse cx="609" cy="700" rx="7" ry="36"/>
  <ellipse cx="1025" cy="885" rx="9" ry="8"/>
  <ellipse cx="631" cy="850" rx="4" ry="3.5"/>
  <path d="M1440,525 Q1470,508 1500,522 L1530,540 L1526,546 L1495,532 Q1470,522 1444,535Z"/>
  <ellipse cx="1448" cy="712" rx="9" ry="24" transform="rotate(30 1448 712)"/>
  <ellipse cx="1424" cy="744" rx="7" ry="8"/>
  <ellipse cx="1409" cy="761" rx="6" ry="7"/>
  <ellipse cx="1413" cy="778" rx="6" ry="6"/>
  <ellipse cx="1410" cy="797" rx="7" ry="12"/>
  <ellipse cx="1402" cy="815" rx="6" ry="6"/>
  <ellipse cx="1343" cy="852" rx="26" ry="18"/>
  <ellipse cx="1375" cy="845" rx="14" ry="13"/>
  <ellipse cx="1400" cy="938" rx="32" ry="16"/>
  <ellipse cx="1305" cy="946" rx="22" ry="10"/>
  <ellipse cx="1137" cy="942" rx="17" ry="13"/>
  <ellipse cx="1495" cy="440" rx="9" ry="14" transform="rotate(-25 1495 440)"/>
  <ellipse cx="1750" cy="418" rx="14" ry="9"/>
  <ellipse cx="1768" cy="428" rx="4" ry="14" transform="rotate(-30 1768 428)"/>
  <ellipse cx="1590" cy="668" rx="7" ry="6"/>
  <ellipse cx="1205" cy="815" rx="18" ry="6"/>
 </g>
 <g fill="none" stroke="#62b487" stroke-width="9" stroke-linecap="round">
  <path d="M1686,519 Q1700,507 1722,503 Q1745,499 1765,503 L1781,509" stroke-dasharray="14 5"/>
  <path d="M1636,540 Q1652,544 1668,540 Q1680,532 1718,522" stroke-dasharray="8 10"/>
  <path d="M1649,566 Q1655,582 1680,594 L1688,601 M1678,574 L1683,596"/>
  <path d="M1737,526 Q1731,545 1736,565" stroke-width="8"/>
  <path d="M1746,555 Q1745,585 1726,604"/>
  <path d="M1751,585 l2,16 M1773,562 l3,6 M1770,607 l1,2" stroke-width="8"/>
 </g>
 <g fill="#8fca8a">
  <ellipse cx="1195" cy="525" rx="30" ry="38"/>
  <ellipse cx="1160" cy="548" rx="20" ry="12"/>
  <ellipse cx="1190" cy="593" rx="8" ry="8"/>
  <ellipse cx="1340" cy="530" rx="24" ry="20"/>
  <ellipse cx="1405" cy="545" rx="22" ry="28"/>
  <ellipse cx="1392" cy="597" rx="22" ry="28"/>
  <ellipse cx="1318" cy="518" rx="10" ry="10"/>
  <ellipse cx="1365" cy="672" rx="9" ry="42" transform="rotate(22 1365 672)"/>
  <ellipse cx="1300" cy="728" rx="7" ry="36" transform="rotate(50 1300 728)"/>
  <ellipse cx="1125" cy="748" rx="38" ry="8" transform="rotate(-12 1125 748)"/>
  <ellipse cx="994" cy="527" rx="7" ry="4"/>
  <ellipse cx="1023" cy="535" rx="13" ry="4" transform="rotate(15 1023 535)"/>
  <ellipse cx="1043" cy="544" rx="8" ry="3"/>
  <ellipse cx="1033" cy="560" rx="8" ry="9"/>
  <ellipse cx="980" cy="517" rx="4" ry="3"/>
  <ellipse cx="700" cy="478" rx="16" ry="12"/>
 </g>
 <g fill="#4b9aec"><path d="M1180,485 L1205,478 L1225,490 L1230,520 L1215,530 L1195,520 L1182,505Z"/></g>
</g>
<g opacity="0.6" filter="url(#mot)">
 <g fill="#6a8a6c">
  <ellipse cx="875" cy="655" rx="8" ry="18"/><ellipse cx="777" cy="660" rx="5" ry="18"/><ellipse cx="630" cy="540" rx="10" ry="10"/>
  <ellipse cx="1200" cy="545" rx="14" ry="14"/><ellipse cx="1345" cy="528" rx="12" ry="10"/><ellipse cx="1392" cy="600" rx="12" ry="16"/><ellipse cx="1408" cy="548" rx="12" ry="16"/>
  <ellipse cx="1345" cy="852" rx="14" ry="9"/><ellipse cx="1400" cy="940" rx="14" ry="8"/><ellipse cx="1448" cy="715" rx="5" ry="16" transform="rotate(28 1448 715)"/>
 </g>
</g>
</svg></div>
<div id="rborder"></div>
<!-- header icons -->
<svg class="abs" style="left:540px;top:170px" width="50" height="20" viewBox="540 170 50 20">
 <path d="M545.5 176.5 L557.5 176.5 L551.5 183Z" fill="#111"/>
 <path d="M573.5 174 L585.5 185.5 M585.5 174 L573.5 185.5" stroke="#111" stroke-width="2.2"/>
</svg>
<svg class="abs" style="left:1728px;top:170px" width="52" height="20" viewBox="1728 170 52 20">
 <path d="M1734 176.5 L1746 176.5 L1740 182.5Z" fill="#111"/>
 <path d="M1762 174 L1774 185.5 M1774 174 L1762 185.5" stroke="#111" stroke-width="2.2"/>
</svg>
<svg class="abs" style="left:44px;top:5px" width="16" height="10"><path d="M3 2 L13 2 L8 8Z" fill="#5a1416"/></svg>
<div class="abs" style="left:315px;top:7px;width:10px;height:10px;border-radius:50%;background:#d8d8d8"></div>
<svg class="abs" style="left:603px;top:195px" width="1178" height="759" viewBox="603 195 1178 759"><rect x="1037.4" y="605.2" width="10" height="10" fill="#f5dc00" stroke="#47474a" stroke-width="2"/><rect x="1040.9" y="608.7" width="3" height="3" fill="#47474a"/><rect x="971.9" y="625.3" width="10" height="10" fill="#f5dc00" stroke="#47474a" stroke-width="2"/><rect x="975.4" y="628.8" width="3" height="3" fill="#47474a"/><rect x="1226.1" y="701.2" width="10" height="10" fill="#f5dc00" stroke="#47474a" stroke-width="2"/><rect x="1229.6" y="704.7" width="3" height="3" fill="#47474a"/><rect x="1327" y="665.3" width="10" height="10" fill="#f5dc00" stroke="#47474a" stroke-width="2"/><rect x="1330.5" y="668.8" width="3" height="3" fill="#47474a"/><rect x="1316.3" y="719" width="10" height="10" fill="#f5dc00" stroke="#47474a" stroke-width="2"/><rect x="1319.8" y="722.5" width="3" height="3" fill="#47474a"/><rect x="1161.2" y="783.5" width="10" height="10" fill="#f5dc00" stroke="#47474a" stroke-width="2"/><rect x="1164.7" y="787.0" width="3" height="3" fill="#47474a"/><rect x="977" y="740.4" width="10" height="10" fill="#f5dc00" stroke="#47474a" stroke-width="2"/><rect x="980.5" y="743.9" width="3" height="3" fill="#47474a"/><rect x="1007.6" y="773.5" width="10" height="10" fill="#f5dc00" stroke="#47474a" stroke-width="2"/><rect x="1011.1" y="777.0" width="3" height="3" fill="#47474a"/><rect x="1171" y="809.5" width="10" height="10" fill="#f5dc00" stroke="#47474a" stroke-width="2"/><rect x="1174.5" y="813.0" width="3" height="3" fill="#47474a"/><rect x="1135" y="842" width="10" height="10" fill="#f5dc00" stroke="#47474a" stroke-width="2"/><rect x="1138.5" y="845.5" width="3" height="3" fill="#47474a"/><rect x="1381" y="898" width="10" height="10" fill="#f5dc00" stroke="#47474a" stroke-width="2"/><rect x="1384.5" y="901.5" width="3" height="3" fill="#47474a"/><circle cx="1162.5" cy="622.8" r="5" fill="#f5dc00" stroke="#47474a" stroke-width="2"/><circle cx="1162.5" cy="622.8" r="1.6" fill="#47474a"/><circle cx="1350.5" cy="701" r="5" fill="#f5dc00" stroke="#47474a" stroke-width="2"/><circle cx="1350.5" cy="701" r="1.6" fill="#47474a"/><circle cx="1155.2" cy="898.2" r="5" fill="#f5dc00" stroke="#47474a" stroke-width="2"/><circle cx="1155.2" cy="898.2" r="1.6" fill="#47474a"/><circle cx="1236.3" cy="881" r="5" fill="#f5dc00" stroke="#47474a" stroke-width="2"/><circle cx="1236.3" cy="881" r="1.6" fill="#47474a"/><circle cx="1284.6" cy="845.6" r="5" fill="#f5dc00" stroke="#47474a" stroke-width="2"/><circle cx="1284.6" cy="845.6" r="1.6" fill="#47474a"/><circle cx="783.4" cy="477.3" r="4.6" fill="#fff" stroke="#47474a" stroke-width="1.8"/><circle cx="783.4" cy="477.3" r="1.5" fill="#47474a"/><circle cx="1481.6" cy="648.6" r="4.6" fill="#fff" stroke="#47474a" stroke-width="1.8"/><circle cx="1481.6" cy="648.6" r="1.5" fill="#47474a"/><circle cx="1286.4" cy="788.5" r="4.6" fill="#fff" stroke="#47474a" stroke-width="1.8"/><circle cx="1286.4" cy="788.5" r="1.5" fill="#47474a"/><rect x="1168.3" y="708.5" width="7.5" height="7.5" fill="#fff" stroke="#47474a" stroke-width="2"/><rect x="1170.8" y="711.0" width="2.5" height="2.5" fill="#47474a"/><rect x="723" y="877" width="7.5" height="7.5" fill="#fff" stroke="#47474a" stroke-width="2"/><rect x="725.5" y="879.5" width="2.5" height="2.5" fill="#47474a"/><text x="1046.4" y="601.7" textLength="60.8" lengthAdjust="spacingAndGlyphs" font-size="16.8" font-weight="700" fill="#3a1e1e" stroke="#fff" stroke-width="2.5" stroke-linejoin="round" paint-order="stroke" font-family="Liberation Sans">Calgary</text><text x="985.5" y="650.8" textLength="85.8" lengthAdjust="spacingAndGlyphs" font-size="16.8" font-weight="700" fill="#3a1e1e" stroke="#fff" stroke-width="2.5" stroke-linejoin="round" paint-order="stroke" font-family="Liberation Sans">Vancouver</text><text x="1235.5" y="697.5" textLength="65.1" lengthAdjust="spacingAndGlyphs" font-size="16.8" font-weight="700" fill="#3a1e1e" stroke="#fff" stroke-width="2.5" stroke-linejoin="round" paint-order="stroke" font-family="Liberation Sans">Chicago</text><text x="1339.2" y="661.7" textLength="71.8" lengthAdjust="spacingAndGlyphs" font-size="16.8" font-weight="700" fill="#3a1e1e" stroke="#fff" stroke-width="2.5" stroke-linejoin="round" paint-order="stroke" font-family="Liberation Sans">Montreal</text><text x="1328.5" y="745.5" textLength="100.4" lengthAdjust="spacingAndGlyphs" font-size="16.8" font-weight="700" fill="#3a1e1e" stroke="#fff" stroke-width="2.5" stroke-linejoin="round" paint-order="stroke" font-family="Liberation Sans">Philadelphia</text><text x="1173.6" y="779.6" textLength="50.6" lengthAdjust="spacingAndGlyphs" font-size="16.8" font-weight="700" fill="#3a1e1e" stroke="#fff" stroke-width="2.5" stroke-linejoin="round" paint-order="stroke" font-family="Liberation Sans">Dallas</text><text x="987.7" y="736.6" textLength="111.9" lengthAdjust="spacingAndGlyphs" font-size="16.8" font-weight="700" fill="#3a1e1e" stroke="#fff" stroke-width="2.5" stroke-linejoin="round" paint-order="stroke" font-family="Liberation Sans">San Francisco</text><text x="1019" y="799.3" textLength="99.7" lengthAdjust="spacingAndGlyphs" font-size="16.8" font-weight="700" fill="#3a1e1e" stroke="#fff" stroke-width="2.5" stroke-linejoin="round" paint-order="stroke" font-family="Liberation Sans">Los Angeles</text><text x="1182.9" y="834.5" textLength="67.3" lengthAdjust="spacingAndGlyphs" font-size="16.8" font-weight="700" fill="#3a1e1e" stroke="#fff" stroke-width="2.5" stroke-linejoin="round" paint-order="stroke" font-family="Liberation Sans">Houston</text><text x="1049.5" y="864.4" textLength="81.6" lengthAdjust="spacingAndGlyphs" font-size="16.8" font-weight="700" fill="#3a1e1e" stroke="#fff" stroke-width="2.5" stroke-linejoin="round" paint-order="stroke" font-family="Liberation Sans">Monterrey</text><text x="1391" y="894.8" textLength="74.7" lengthAdjust="spacingAndGlyphs" font-size="16.8" font-weight="700" fill="#3a1e1e" stroke="#fff" stroke-width="2.5" stroke-linejoin="round" paint-order="stroke" font-family="Liberation Sans">San Juan</text><text x="1167.5" y="616.8" textLength="58.9" lengthAdjust="spacingAndGlyphs" font-size="13" font-weight="700" fill="#3a1e1e" stroke="#fff" stroke-width="2.5" stroke-linejoin="round" paint-order="stroke" font-family="Liberation Sans">Winnipeg</text><text x="1358.1" y="705.8" textLength="44.4" lengthAdjust="spacingAndGlyphs" font-size="13" font-weight="700" fill="#3a1e1e" stroke="#fff" stroke-width="2.5" stroke-linejoin="round" paint-order="stroke" font-family="Liberation Sans">Boston</text><text x="1161.6" y="893.5" textLength="44.3" lengthAdjust="spacingAndGlyphs" font-size="13" font-weight="700" fill="#3a1e1e" stroke="#fff" stroke-width="2.5" stroke-linejoin="round" paint-order="stroke" font-family="Liberation Sans">Puebla</text><text x="1241" y="898.2" textLength="47.9" lengthAdjust="spacingAndGlyphs" font-size="13" font-weight="700" fill="#3a1e1e" stroke="#fff" stroke-width="2.5" stroke-linejoin="round" paint-order="stroke" font-family="Liberation Sans">Cancún</text><text x="1290" y="840.3" textLength="39.5" lengthAdjust="spacingAndGlyphs" font-size="13" font-weight="700" fill="#3a1e1e" stroke="#fff" stroke-width="2.5" stroke-linejoin="round" paint-order="stroke" font-family="Liberation Sans">Miami</text><text x="789.7" y="472.2" textLength="59.7" lengthAdjust="spacingAndGlyphs" font-size="12.8" font-weight="400" fill="#5a4848" stroke="#fff" stroke-width="2.5" stroke-linejoin="round" paint-order="stroke" font-family="Liberation Sans">Anchorage</text><text x="1148.7" y="704.5" textLength="44.3" lengthAdjust="spacingAndGlyphs" font-size="12.8" font-weight="400" fill="#5a4848" stroke="#fff" stroke-width="2.5" stroke-linejoin="round" paint-order="stroke" font-family="Liberation Sans">Omaha</text><text x="1294" y="793.8" textLength="59.4" lengthAdjust="spacingAndGlyphs" font-size="12.8" font-weight="400" fill="#5a4848" stroke="#fff" stroke-width="2.5" stroke-linejoin="round" paint-order="stroke" font-family="Liberation Sans">Charleston</text><text x="1484" y="643.3" textLength="52" lengthAdjust="spacingAndGlyphs" font-size="12.8" font-weight="400" fill="#5a4848" stroke="#fff" stroke-width="2.5" stroke-linejoin="round" paint-order="stroke" font-family="Liberation Sans">St John's</text><text x="732" y="873.8" textLength="55.5" lengthAdjust="spacingAndGlyphs" font-size="12.8" font-weight="400" fill="#5a4848" stroke="#fff" stroke-width="2.5" stroke-linejoin="round" paint-order="stroke" font-family="Liberation Sans">Honolulu</text></svg>
<!-- map overlays -->
<div class="abs" style="left:613px;top:205px;width:129px;height:34px;border:2px solid #45474a;background:#e8ebee"></div>
<svg class="abs" style="left:613px;top:205px" width="129" height="34" viewBox="613 205 129 34">
 <path d="M624.5 222 H638.5 M631.5 215 V229" stroke="#555" stroke-width="3"/>
 <path d="M654.5 222 H669" stroke="#555" stroke-width="3"/>
 <g fill="#f6c37a" stroke="#d0702a" stroke-width="0.9">
 <path d="M688.5 227 L686 220 Q685.5 217.5 688 218 L690 222 L690 214.5 Q690 212.5 692 212.5 Q693.5 212.5 693.5 214.5 L693.5 220 L694 212 Q694 210.5 695.8 210.5 Q697.5 210.5 697.5 212.5 L697.5 220 L698.5 214 Q698.8 212.5 700.3 212.8 Q701.7 213.2 701.5 215 L701 224 Q701 230 697 232 L692 232 Q689.5 230.5 688.5 227Z"/>
 </g>
 <rect x="714" y="215" width="14" height="10" fill="#c2c4c7"/>
 <path d="M714 218 V215 H717 M725 215 H728 V218" stroke="#2f6fb8" stroke-width="1.5" fill="none"/>
 <circle cx="727" cy="223" r="4.5" fill="#dde8f5" stroke="#1f5a9a" stroke-width="1.6"/>
 <path d="M730 226.5 L734 230.5" stroke="#1f5a9a" stroke-width="2"/>
 <path d="M725 223 h4 M727 221 v4" stroke="#1f5a9a" stroke-width="1.2"/>
</svg>
<div class="abs" style="left:613px;top:249.5px;width:145px;height:31px;border:2px solid #45474a;background:#e8ebee"></div>
<div class="abs" style="left:618px;top:261.5px;width:48px;height:8px;background:#6b9bd8"></div>
<div class="abs" style="left:670px;top:259px;font-size:13.8px;line-height:18px;font-weight:bold;color:#333;white-space:nowrap">Route 1</div>
<div class="abs" style="left:1641px;top:205px;width:130px;height:42px;border:2px solid #4a4a4a;background:rgba(236,238,240,0.92);overflow:hidden">
 <svg class="abs" style="left:-2px;top:-2px" width="130" height="42" viewBox="1641 205 130 42">
  <path d="M1651.5 219.5 H1761.5" stroke="#555" stroke-width="2"/>
  <path d="M1651.5 214.5 V224.5 M1761.5 214.5 V224.5 M1678.5 216.5 V222.5 M1706.4 215.5 V223.5 M1733.4 216.5 V222.5" stroke="#555" stroke-width="2"/>
  <text x="1647.5" y="245.5" font-size="14.5" fill="#444" font-family="Liberation Sans">0</text>
  <text x="1688.5" y="245.5" font-size="14.8" fill="#444" font-family="Liberation Sans">Miles</text>
  <text x="1740.5" y="245.5" font-size="14.5" fill="#444" font-family="Liberation Sans">350</text>
 </svg>
</div>
<!-- legend left -->
<div class="abs" style="left:617.5px;top:622.5px;width:149px;height:199px;border:2.5px solid #45474a;background:rgba(233,236,239,0.96);overflow:hidden;font-weight:bold;font-size:14.6px;color:#444;white-space:nowrap">
 <div class="abs" style="left:2px;top:9px;width:30px;height:10px;background:#5cc23d"></div><div class="abs" style="left:41.5px;top:6.5px;line-height:18px">Desig/Pref/Alt</div>
 <div class="abs" style="left:2px;top:33px;width:30px;height:10px;background:#62cf9b"></div><div class="abs" style="left:41.5px;top:30.5px;line-height:18px">Desig Expl</div>
 <div class="abs" style="left:2px;top:57px;width:30px;height:10px;background:#9fd470"></div><div class="abs" style="left:41.5px;top:54.5px;line-height:18px">Desig Inh</div>
 <div class="abs" style="left:2px;top:81px;width:30px;height:10px;background:#5ee23a"></div><div class="abs" style="left:41.5px;top:78.5px;line-height:18px">Desig Rad</div>
 <div class="abs" style="left:2px;top:105px;width:30px;height:10px;background:#a82420"></div><div class="abs" style="left:41.5px;top:102.5px;line-height:18px">Prohibited</div>
 <div class="abs" style="left:2px;top:129px;width:30px;height:10px;background:#cf553e"></div><div class="abs" style="left:42.5px;top:126.5px;line-height:18px">Some Cmds Prohibited</div>
 <div class="abs" style="left:2px;top:153px;width:30px;height:10px;background:#d03c42"></div><div class="abs" style="left:41.5px;top:150.5px;line-height:18px">Restricted</div>
 <div class="abs" style="left:2px;top:177px;width:30px;height:10px;background:#3dbaf0"></div><div class="abs" style="left:41.5px;top:174.5px;line-height:18px">Permit</div>
</div>
<!-- legend right -->
<div class="abs" style="left:1589.5px;top:619.5px;width:159px;height:185px;border:2.5px solid #45474a;background:rgba(233,236,239,0.96);overflow:hidden;font-weight:bold;font-size:14px;color:#444;white-space:nowrap">
 <svg class="abs" style="left:0;top:0" width="60" height="185">
  <path d="M2 11.5 H50" stroke="#e8ae88" stroke-width="2.5"/>
  <path d="M2 27.5 H50" stroke="#f0e3a0" stroke-width="2.5"/>
  <path d="M2 43.5 H50" stroke="#9fb2e8" stroke-width="2.5"/>
  <path d="M2 59.5 H50" stroke="#d4d4d4" stroke-width="2.5"/>
  <path d="M2 75.5 H50" stroke="#d2c9c2" stroke-width="2.5"/>
  <path d="M2 91.5 H50" stroke="#eeae48" stroke-width="2.5"/>
  <path d="M2 107.5 H50" stroke="#5b8fd6" stroke-width="2.5" stroke-dasharray="8 16"/>
  <path d="M8 123.5 H50" stroke="#c01010" stroke-width="2.5" stroke-dasharray="3 12"/>
  <path d="M2 139.5 H50" stroke="#b8b0aa" stroke-width="2.5"/>
  <path d="M2 155.5 H50" stroke="#eba88f" stroke-width="5"/>
  <path d="M2 171.5 H50" stroke="#df8a44" stroke-width="5"/>
 </svg>
 <div class="abs" style="left:59px;top:3px;line-height:16px">Interstate<br>Major Highway<br>Toll<br>Primary<br>Secondary<br>Ramp<br>Ferry<br>Closed<br>No Thru Truck<br>Restricted<br>Comm Prohibited</div>
</div>
</body></html>
